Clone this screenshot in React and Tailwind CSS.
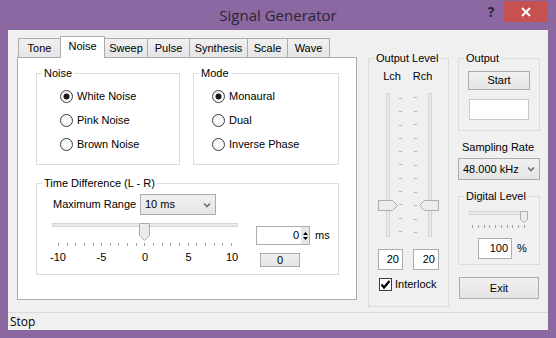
import React from "react";

const TABS = [
  { label: "Tone", w: "w-[43px]" },
  { label: "Noise", w: "w-[45px]", active: true },
  { label: "Sweep", w: "w-[44px]" },
  { label: "Pulse", w: "w-[43px]" },
  { label: "Synthesis", w: "w-[59px]" },
  { label: "Scale", w: "w-[41px]" },
  { label: "Wave", w: "w-[43px]" },
];

function GroupBox({ label, className = "", children }) {
  return (
    <fieldset className={`border border-[#dcdcdc] ${className}`}>
      <legend className="ml-[5px] px-[2px] leading-[12px]">{label}</legend>
      {children}
    </fieldset>
  );
}

function Radio({ label, checked }) {
  return (
    <div className="flex h-[24px] items-center gap-[4px]">
      <svg width="13" height="13" viewBox="0 0 13 13">
        <defs>
          <linearGradient id="rg" x1="0" y1="0" x2="0" y2="1">
            <stop offset="0" stopColor="#f4f4f4" />
            <stop offset="1" stopColor="#ffffff" />
          </linearGradient>
        </defs>
        <circle cx="6.5" cy="6.5" r="6" fill="url(#rg)" stroke="#3c3c3c" />
        {checked && <circle cx="6.5" cy="6.5" r="3" fill="#1b1b1b" />}
      </svg>
      <span>{label}</span>
    </div>
  );
}

function Chevron() {
  return (
    <svg width="8" height="6" viewBox="0 0 8 6">
      <path d="M1 1.5L4 4.5L7 1.5" fill="none" stroke="#6d6d6d" strokeWidth="1.6" />
    </svg>
  );
}

function Combo({ value, className = "" }) {
  return (
    <div
      className={`flex items-center justify-between border border-[#acacac] bg-gradient-to-b from-[#f0f0f0] to-[#e5e5e5] pl-[4px] pr-[4px] ${className}`}
    >
      <span>{value}</span>
      <Chevron />
    </div>
  );
}

function Button({ children, className = "" }) {
  return (
    <div
      className={`flex items-center justify-center border border-[#acacac] bg-gradient-to-b from-[#f0f0f0] to-[#e5e5e5] ${className}`}
    >
      {children}
    </div>
  );
}

function VThumb({ dir }) {
  return (
    <svg width="20" height="11" viewBox="0 0 20 11">
      <path
        d={dir === "right" ? "M0.5 0.5H14.5L19.5 5.5L14.5 10.5H0.5Z" : "M19.5 0.5H5.5L0.5 5.5L5.5 10.5H19.5Z"}
        fill="#ececec"
        stroke="#acacac"
      />
    </svg>
  );
}

function Ticks({ count, className = "", vertical }) {
  return (
    <div className={`flex justify-between ${vertical ? "flex-col" : ""} ${className}`}>
      {Array.from({ length: count }).map((_, i) => (
        <div key={i} className={vertical ? "h-px w-[3px] bg-[#b4b4b4]" : "h-[3px] w-px bg-[#a0a0a0]"} />
      ))}
    </div>
  );
}

export default function App() {
  return (
    <div className="flex h-[338px] w-[556px] flex-col bg-[#8c68a2] font-['Liberation_Sans',Arial,sans-serif] text-[11px] leading-[13px] text-black">
      {/* Title bar */}
      <div className="grid h-[30px] grid-cols-[1fr_auto_1fr]">
        <div />
        <div className="pt-[5px] font-['Open_Sans',sans-serif] text-[15px] leading-[20px] text-[#2b2533]">
          Signal Generator
        </div>
        <div className="flex items-start justify-end pr-[8px] pt-[1px]">
          <div className="flex h-[21px] w-[26px] items-center justify-center font-['Open_Sans',sans-serif] text-[14px] font-bold text-[#2b2533]">
            ?
          </div>
          <div className="flex h-[21px] w-[44px] items-center justify-center bg-[#c75050]">
            <svg width="10" height="10" viewBox="0 0 10 10">
              <path d="M1 1L9 9M9 1L1 9" stroke="#fff" strokeWidth="2" />
            </svg>
          </div>
        </div>
      </div>

      {/* Client area */}
      <div className="mx-[8px] flex h-[300px] flex-col bg-[#f0f0f0]">
        <div className="flex h-[282px] items-start">
          {/* Tab control */}
          <div className="ml-[9px] mt-[6px]">
            <div className="flex h-[21px] items-end pl-px">
              {TABS.map((t, i) => (
                <div
                  key={t.label}
                  className={`flex items-start justify-center border border-b-0 border-[#acacac] pt-[3px] ${t.w} ${
                    i > 0 ? "-ml-px" : ""
                  } ${t.active ? "relative z-10 -mb-px h-[22px] bg-white" : "h-[19px] bg-gradient-to-b from-[#f0f0f0] to-[#e5e5e5]"}`}
                >
                  {t.label}
                </div>
              ))}
            </div>
            <div className="h-[243px] w-[340px] border border-[#acacac] bg-white pl-[18px] pt-[9px]">
              <div className="flex">
                <GroupBox label="Noise" className="w-[144px]">
                  <div className="h-[85px] pl-[23px] pt-[5px]">
                    <Radio label="White Noise" checked />
                    <Radio label="Pink Noise" />
                    <Radio label="Brown Noise" />
                  </div>
                </GroupBox>
                <GroupBox label="Mode" className="ml-[13px] w-[146px]">
                  <div className="h-[85px] pl-[18px] pt-[5px]">
                    <Radio label="Monaural" checked />
                    <Radio label="Dual" />
                    <Radio label="Inverse Phase" />
                  </div>
                </GroupBox>
              </div>

              <GroupBox label="Time Difference (L - R)" className="mt-[12px] w-[303px]">
                <div className="flex h-[85px] pl-[15px] pt-[5px]">
                  <div className="w-[186px]">
                    <div className="flex h-[21px] items-center">
                      <span className="w-[88px] pl-px">Maximum Range</span>
                      <Combo value="10 ms" className="h-[21px] w-[76px]" />
                    </div>
                    <div className="relative mt-[8px] h-[18px]">
                      <div className="mt-[6px] h-[4px] border border-[#d6d6d6] bg-[#e7eaea]" />
                      <div className="absolute left-[87px] top-0">
                        <svg width="11" height="18" viewBox="0 0 11 18">
                          <path d="M0.5 0.5H10.5V12.5L5.5 17.5L0.5 12.5Z" fill="#ececec" stroke="#acacac" />
                        </svg>
                      </div>
                    </div>
                    <Ticks count={21} className="mt-[2px] px-[6px]" />
                    <div className="-ml-[4px] mt-[5px] flex w-[194px] justify-between">
                      {["-10", "-5", "0", "5", "10"].map((l) => (
                        <span key={l} className="w-[20px] text-center">
                          {l}
                        </span>
                      ))}
                    </div>
                  </div>
                  <div className="ml-[18px] pt-[32px]">
                    <div className="flex items-center">
                      <div className="flex h-[19px] w-[54px] items-center justify-end border border-[#abadb3] bg-white">
                        <span className="pr-[2px]">0</span>
                        <div className="flex h-full w-[8px] flex-col items-center justify-center gap-[2px] bg-[#e6e6e6]">
                          <svg width="5" height="3" viewBox="0 0 5 3">
                            <path d="M0 3L2.5 0L5 3Z" fill="#000" />
                          </svg>
                          <svg width="5" height="3" viewBox="0 0 5 3">
                            <path d="M0 0L2.5 3L5 0Z" fill="#000" />
                          </svg>
                        </div>
                      </div>
                      <span className="ml-[5px]">ms</span>
                    </div>
                    <Button className="ml-[4px] mt-[8px] h-[14px] w-[40px]">0</Button>
                  </div>
                </div>
              </GroupBox>
            </div>
          </div>

          {/* Output level */}
          <GroupBox label="Output Level" className="ml-[11px] mt-[22px] w-[81px]">
            <div className="h-[236px]">
              <div className="mt-[6px] flex pl-[8px]">
                <span className="w-[30px] text-center">Lch</span>
                <span className="w-[31px] text-center">Rch</span>
              </div>
              <div className="relative mt-[10px] flex h-[144px]">
                <div className="ml-[17px] h-full w-[4px] border border-[#d6d6d6] bg-[#e7eaea]" />
                <Ticks count={11} vertical className="ml-[9px] h-full py-[5px]" />
                <Ticks count={11} vertical className="ml-[12px] h-full py-[4px]" />
                <div className="ml-[11px] h-full w-[4px] border border-[#d6d6d6] bg-[#e7eaea]" />
                <div className="absolute left-[9px] top-[107px]">
                  <VThumb dir="right" />
                </div>
                <div className="absolute left-[50px] top-[107px]">
                  <VThumb dir="left" />
                </div>
              </div>
              <div className="mt-[12px] flex pl-[9px]">
                <div className="flex h-[21px] w-[25px] items-center justify-end border border-[#acacac] bg-white pr-[3px]">20</div>
                <div className="ml-[10px] flex h-[21px] w-[26px] items-center justify-end border border-[#acacac] bg-white pr-[3px]">20</div>
              </div>
              <div className="mt-[8px] flex items-center pl-[10px]">
                <svg width="13" height="13" viewBox="0 0 13 13">
                  <rect x="0.5" y="0.5" width="12" height="12" fill="#fff" stroke="#3c3c3c" />
                  <path d="M2.5 6.5L5 9.5L10.5 3" fill="none" stroke="#000" strokeWidth="2.2" />
                </svg>
                <span className="ml-[3px]">Interlock</span>
              </div>
            </div>
          </GroupBox>

          {/* Right column */}
          <div className="ml-[9px] mt-[22px] w-[82px]">
            <GroupBox label="Output">
              <div className="h-[66px] pt-[7px]">
                <Button className="ml-[9px] h-[19px] w-[62px]">Start</Button>
                <div className="ml-[10px] mt-[9px] h-[21px] w-[60px] border border-[#c8c8c8] bg-white" />
              </div>
            </GroupBox>
            <div className="ml-[4px] mt-[10px]">Sampling Rate</div>
            <Combo value="48.000 kHz" className="mt-[4px] h-[22px] w-[82px]" />
            <GroupBox label="Digital Level" className="mt-[10px]">
              <div className="h-[62px] pt-[7px]">
                <div className="relative ml-[10px] h-[12px] w-[59px]">
                  <div className="mt-[2px] h-[4px] border border-[#d6d6d6] bg-[#e7eaea]" />
                  <div className="absolute right-0 top-0">
                    <svg width="8" height="12" viewBox="0 0 8 12">
                      <path d="M0.5 0.5H7.5V8.5L4 11.5L0.5 8.5Z" fill="#ececec" stroke="#acacac" />
                    </svg>
                  </div>
                </div>
                <Ticks count={10} className="ml-[13px] mt-[2px] w-[53px]" />
                <div className="mt-[10px] flex items-center pl-[19px]">
                  <div className="flex h-[21px] w-[34px] items-center justify-end border border-[#acacac] bg-white pr-[3px]">100</div>
                  <span className="ml-[5px]">%</span>
                </div>
              </div>
            </GroupBox>
            <Button className="ml-px mt-[12px] h-[22px] w-[80px]">Exit</Button>
          </div>
        </div>

        {/* Status bar */}
        <div className="h-[18px] border-t border-[#dadada] pl-[2px] font-['Open_Sans',sans-serif] text-[12px] leading-[17px]">
          Stop
        </div>
      </div>
    </div>
  );
}
